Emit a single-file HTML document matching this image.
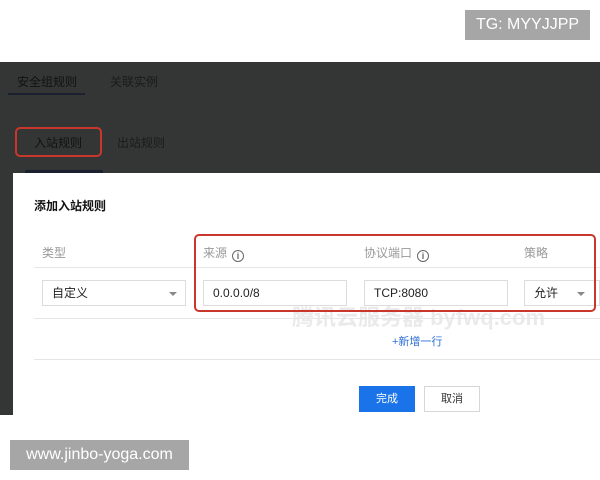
<!DOCTYPE html>
<html><head><meta charset="utf-8"><style>
*{margin:0;padding:0;box-sizing:border-box}
body{width:600px;height:480px;background:#fff;position:relative;overflow:hidden;font-family:"Liberation Sans","Noto Sans CJK SC",sans-serif}
.a{position:absolute}
.dark{left:0;top:62px;width:600px;height:353px;background:#343636}
.modal{left:13px;top:173px;width:587px;height:242px;background:#fff}
.t{font-size:12px;color:#999;white-space:nowrap}
.inp{position:absolute;border:1px solid #dcdcdc;background:#fff;font-size:12px;color:#222;padding-left:9px;line-height:24px;height:26px}
.arr{position:absolute;width:0;height:0;border-left:4px solid transparent;border-right:4px solid transparent;border-top:4px solid #888}
.info{display:inline-block;width:12px;height:12px;border:1.3px solid #666;border-radius:50%;font-size:9px;line-height:10px;text-align:center;color:#666;vertical-align:-2px;margin-left:5px;font-weight:bold}
.badge{background:#a6a6a6;color:#fff;font-size:16px;text-align:center}
</style></head><body>
<div class="a badge" style="left:465px;top:10px;width:125px;height:30px;line-height:30px">TG: MYYJJPP</div>
<div class="a dark"></div>
<div class="a" style="left:17px;top:73px;font-size:12px;color:#111">安全组规则</div>
<div class="a" style="left:8px;top:93px;width:77px;height:2px;background:#1b2030"></div>
<div class="a" style="left:110px;top:73px;font-size:12px;color:#1a1a1a">关联实例</div>
<div class="a" style="left:15px;top:127px;width:87px;height:30px;border:2px solid #c9372c;border-radius:5px"></div>
<div class="a" style="left:34px;top:134px;font-size:12px;color:#111">入站规则</div>
<div class="a" style="left:117px;top:134px;font-size:12px;color:#1a1a1a">出站规则</div>
<div class="a" style="left:25px;top:170px;width:78px;height:3px;background:#1b2030"></div>
<div class="a modal"></div>
<div class="a" style="left:34px;top:197px;font-size:12px;color:#111;font-weight:bold">添加入站规则</div>
<div class="a t" style="left:42px;top:244px">类型</div>
<div class="a t" style="left:203px;top:244px">来源<span class="info">i</span></div>
<div class="a t" style="left:364px;top:244px">协议端口<span class="info">i</span></div>
<div class="a t" style="left:524px;top:244px">策略</div>
<div class="a" style="left:34px;top:267px;width:566px;height:1px;background:#e6e6e6"></div>
<div class="inp" style="left:42px;top:280px;width:144px">自定义</div><div class="arr" style="left:169px;top:292px"></div>
<div class="inp" style="left:203px;top:280px;width:144px">0.0.0.0/8</div>
<div class="inp" style="left:364px;top:280px;width:144px">TCP:8080</div>
<div class="inp" style="left:524px;top:280px;width:76px">允许</div><div class="arr" style="left:577px;top:292px"></div>
<div class="a" style="left:292px;top:300px;font-size:22px;color:#000;opacity:.08;font-weight:bold;white-space:nowrap">腾讯云服务器 byfwq.com</div>
<div class="a" style="left:194px;top:234px;width:402px;height:78px;border:2px solid #c9372c;border-radius:5px"></div>
<div class="a" style="left:34px;top:318px;width:566px;height:1px;background:#e6e6e6"></div>
<div class="a" style="left:392px;top:333px;font-size:11px;color:#2f6fd6">+新增一行</div>
<div class="a" style="left:34px;top:359px;width:566px;height:1px;background:#e6e6e6"></div>
<div class="a" style="left:359px;top:386px;width:56px;height:26px;background:#1a73e8;color:#fff;font-size:11px;text-align:center;line-height:26px">完成</div>
<div class="a" style="left:424px;top:386px;width:56px;height:26px;border:1px solid #d6d6d6;color:#333;font-size:11px;text-align:center;line-height:24px">取消</div>
<div class="a badge" style="left:10px;top:440px;width:179px;height:30px;line-height:30px">www.jinbo-yoga.com</div>
</body></html>
